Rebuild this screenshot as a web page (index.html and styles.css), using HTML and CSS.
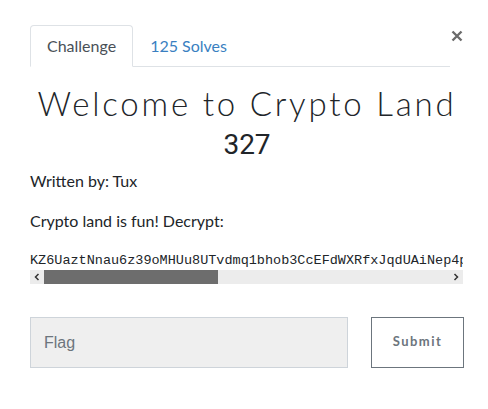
FILE: index.html
```html
<!DOCTYPE html>
<html>
<head>
<meta charset="utf-8">
<link rel="stylesheet" href="styles.css">
</head>
<body>
<div class="modal">
  <div class="header">
    <ul class="tabs">
      <li class="tab active">Challenge</li>
      <li class="tab link">125 Solves</li>
    </ul>
    <button class="close" aria-label="Close">
      <svg width="12" height="12" viewBox="0 0 12 12"><path d="M1.5 1.5 L10.5 10.5 M10.5 1.5 L1.5 10.5" stroke="#6b6b6b" stroke-width="2.4" stroke-linecap="butt"/></svg>
    </button>
  </div>
  <h2 class="title">Welcome to Crypto Land</h2>
  <h3 class="value">327</h3>
  <p class="text author">Written by: Tux</p>
  <p class="text desc">Crypto land is fun! Decrypt:</p>
  <div class="code-box">
    <pre class="code">KZ6UaztNnau6z39oMHUu8UTvdmq1bhob3CcEFdWXRfxJqdUAiNep4pHq7bW2sZkT9rLm5gYvQe3xNc8aPdF1uJhVo6tRiK4wBnE2yGsM7zXaCfL0qDpU5vHkT8jWnYb3</pre>
    <div class="scrollbar">
      <span class="sb-btn"><svg width="6" height="8" viewBox="0 0 6 8"><path d="M4.5 1 L1.5 4 L4.5 7" fill="none" stroke="#333" stroke-width="1.5"/></svg></span>
      <span class="sb-thumb"></span>
      <span class="sb-track"></span>
      <span class="sb-btn"><svg width="6" height="8" viewBox="0 0 6 8"><path d="M1.5 1 L4.5 4 L1.5 7" fill="none" stroke="#333" stroke-width="1.5"/></svg></span>
    </div>
  </div>
  <form class="submit-row">
    <input class="flag" type="text" placeholder="Flag">
    <button class="submit" type="button">Submit</button>
  </form>
</div>
</body>
</html>
```
FILE: styles.css
```css
html, body {
  margin: 0;
  padding: 0;
  background: #fff;
}
body {
  font-family: Lato, "Open Sans", sans-serif;
  color: #212529;
}
.modal {
  width: 434px;
  padding: 25px 24px 0 30px;
}
.header {
  display: flex;
  align-items: flex-start;
}
.tabs {
  list-style: none;
  margin: 0;
  padding: 0;
  display: flex;
  width: 420px;
  border-bottom: 1px solid #dee2e6;
}
.tab {
  font-size: 16px;
  line-height: 24px;
  padding: 8px 16px;
  margin-bottom: -1px;
  border: 1px solid transparent;
  border-radius: 4px 4px 0 0;
}
.tab.active {
  color: #495057;
  border-color: #dee2e6 #dee2e6 #fff;
  background: #fff;
}
.tab.link {
  color: #3a7fc1;
}
.close {
  margin: 5px 0 0 1px;
  padding: 0;
  border: 0;
  background: none;
  width: 12px;
  height: 12px;
  display: flex;
}
.title {
  margin: 16px -10px 0;
  text-align: center;
  font-family: Lato, sans-serif;
  font-weight: 300;
  font-size: 33px;
  line-height: 40px;
  letter-spacing: 2.8px;
  color: #212529;
}
.value {
  margin: 6px 0 0;
  text-align: center;
  font-family: Roboto, "Liberation Sans", sans-serif;
  font-weight: 400;
  font-size: 28px;
  line-height: 32px;
  color: #212529;
}
.text {
  margin: 0;
  font-size: 16px;
  line-height: 24px;
}
.author {
  margin-top: 8px;
}
.desc {
  margin-top: 16px;
}
.code-box {
  margin-top: 19px;
  width: 433px;
  overflow: hidden;
}
.code {
  margin: 0;
  font-family: "Liberation Mono", monospace;
  font-size: 13.5px;
  line-height: 18px;
  color: #212529;
  white-space: pre;
  overflow: hidden;
}
.scrollbar {
  display: flex;
  height: 14px;
  background: #ececec;
}
.sb-btn {
  width: 14px;
  height: 14px;
  display: flex;
  align-items: center;
  justify-content: center;
  flex: none;
}
.sb-thumb {
  width: 174px;
  background: #6d6d6d;
  flex: none;
}
.sb-track {
  flex: 1;
}
.submit-row {
  display: flex;
  gap: 23px;
  margin: 33px 0 0;
}
.flag {
  width: 318px;
  height: 51px;
  box-sizing: border-box;
  border: 1px solid #ced4da;
  background: #efefef;
  padding: 0 13px;
  font-family: "Liberation Sans", Arial, sans-serif;
  font-size: 16px;
  color: #495057;
  outline: none;
}
.flag::placeholder {
  color: #6c757d;
}
.submit {
  width: 93px;
  height: 51px;
  box-sizing: border-box;
  border: 1px solid #6c757d;
  background: #fff;
  color: #6c757d;
  font-family: Lato, sans-serif;
  font-weight: 700;
  font-size: 13px;
  letter-spacing: 1.5px;
  padding: 0 0 3px;
}
```
